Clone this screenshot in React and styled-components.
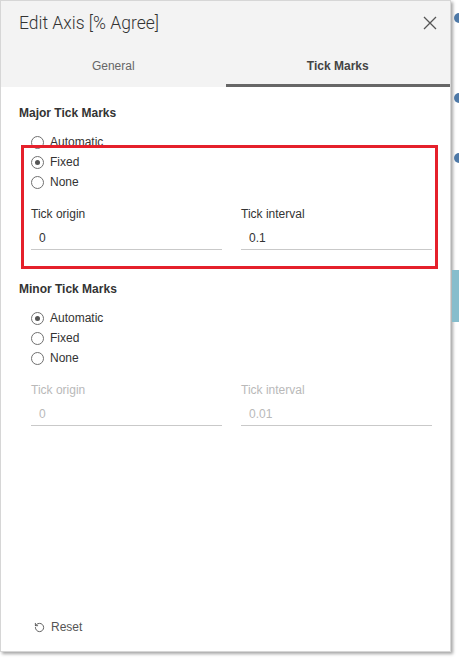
import React from 'react';
import styled, { createGlobalStyle } from 'styled-components';
import { RotateCcw } from 'lucide-react';

const GlobalStyle = createGlobalStyle`
    body {
        margin:0;
        background:#ffffff;
        font-family:"Liberation Sans", Arial, sans-serif;
        color:#333333;
    }
`;

const Page = styled.div`
    display:flex;
    flex-direction:row;
    width:459px;
    height:659px;
    overflow:hidden;
`;

const Panel = styled.div`
    position:relative;
    display:flex;
    flex-direction:column;
    width:451px;
    height:652px;
    box-sizing:border-box;
    border:1px solid #d6d6d6;
    background:#ffffff;
    box-shadow:2px 2px 3px rgba(0, 0, 0, 0.35);
    flex-shrink:0;
`;

const Header = styled.div`
    background:#f3f3f3;
`;

const TitleRow = styled.div`
    display:flex;
    flex-direction:row;
    align-items:center;
    justify-content:space-between;
    height:43px;
    padding:0 12px 0 18px;
`;

const Title = styled.div`
    font-family:Roboto, "Liberation Sans", sans-serif;
    font-weight:300;
    font-size:17.5px;
    color:#333333;
`;

const CloseButton = styled.div`
    display:flex;
    width:16px;
    height:16px;
    cursor:pointer;
`;

const Tabs = styled.div`
    display:flex;
    flex-direction:row;
`;

const Tab = styled.div`
    flex:1;
    height:43px;
    box-sizing:border-box;
    padding-top:4px;
    display:flex;
    align-items:center;
    justify-content:center;
    font-size:12px;
    font-weight:${p => p.$active ? 'bold' : 'normal'};
    color:${p => p.$active ? '#444444' : '#666666'};
    border-bottom:3px solid ${p => p.$active ? '#666666' : 'transparent'};
`;

const Content = styled.div`
    flex:1;
    padding:18px 18px 0;
`;

const SectionTitle = styled.div`
    font-size:12px;
    line-height:16px;
    font-weight:bold;
    color:#333333;
`;

const RadioGroup = styled.div`
    display:flex;
    flex-direction:column;
    margin:11px 0 14px 12px;
`;

const RadioRow = styled.label`
    display:flex;
    flex-direction:row;
    align-items:center;
    height:20px;
    font-size:12px;
    color:#333333;
`;

const RadioCircle = styled.span`
    display:flex;
    align-items:center;
    justify-content:center;
    width:13px;
    height:13px;
    box-sizing:border-box;
    margin-right:6px;
    border:1px solid #707070;
    border-radius:50%;
    background:#ffffff;
    &::after {
        content:"";
        display:${p => p.$checked ? 'block' : 'none'};
        width:5px;
        height:5px;
        border-radius:50%;
        background:#555555;
    }
`;

const FieldRow = styled.div`
    display:grid;
    grid-template-columns:1fr 1fr;
    column-gap:19px;
    margin-left:12px;
`;

const Field = styled.div`
    display:flex;
    flex-direction:column;
`;

const FieldLabel = styled.div`
    font-size:12px;
    line-height:16px;
    color:${p => p.$disabled ? '#b9b9b9' : '#333333'};
`;

const FieldValue = styled.div`
    height:28px;
    box-sizing:border-box;
    padding:8px 0 0 8px;
    font-size:12px;
    line-height:16px;
    color:${p => p.$disabled ? '#b9b9b9' : '#333333'};
    border-bottom:1px solid #c9c9c9;
`;

const Section = styled.div`
    margin-bottom:${p => p.$gap || 0}px;
`;

const Footer = styled.div`
    display:flex;
    flex-direction:row;
    align-items:center;
    height:16px;
    padding:0 0 16px 33px;
    font-size:12px;
    color:#555555;
`;

const ResetIcon = styled(RotateCcw)`
    margin-right:6px;
`;

const Annotation = styled.div`
    position:absolute;
    left:20px;
    top:144px;
    width:417px;
    height:124px;
    box-sizing:border-box;
    border:3px solid #e5202b;
    pointer-events:none;
`;

const Backdrop = styled.div`
    position:relative;
    flex:1;
`;

const Mark = styled.div`
    position:absolute;
    left:3px;
    width:10px;
    height:10px;
    border-radius:50%;
    background:#4e79a7;
`;

const Bar = styled.div`
    position:absolute;
    left:1px;
    top:270px;
    width:8px;
    height:52px;
    background:#86bdcc;
`;

function Radio({ label, checked }){
    return (
        <RadioRow>
            <RadioCircle $checked={checked} />
            {label}
        </RadioRow>
    );
}

function TickSection({ title, selected, origin, interval, disabled, gap }){
    return (
        <Section $gap={gap}>
            <SectionTitle>{title}</SectionTitle>
            <RadioGroup>
                {['Automatic', 'Fixed', 'None'].map(o => (
                    <Radio key={o} label={o} checked={o === selected} />
                ))}
            </RadioGroup>
            <FieldRow>
                <Field>
                    <FieldLabel $disabled={disabled}>Tick origin</FieldLabel>
                    <FieldValue $disabled={disabled}>{origin}</FieldValue>
                </Field>
                <Field>
                    <FieldLabel $disabled={disabled}>Tick interval</FieldLabel>
                    <FieldValue $disabled={disabled}>{interval}</FieldValue>
                </Field>
            </FieldRow>
        </Section>
    );
}

function App(){
    return (
        <Page>
            <GlobalStyle />
            <Panel>
                <Header>
                    <TitleRow>
                        <Title>Edit Axis [% Agree]</Title>
                        <CloseButton>
                            <svg width="16" height="16" viewBox="0 0 16 16">
                                <path d="M2 2 L14 14 M14 2 L2 14" stroke="#555555" strokeWidth="1.3" fill="none" />
                            </svg>
                        </CloseButton>
                    </TitleRow>
                    <Tabs>
                        <Tab>General</Tab>
                        <Tab $active>Tick Marks</Tab>
                    </Tabs>
                </Header>
                <Content>
                    <TickSection title="Major Tick Marks" selected="Fixed" origin="0" interval="0.1" gap={31} />
                    <TickSection title="Minor Tick Marks" selected="Automatic" origin="0" interval="0.01" disabled />
                </Content>
                <Footer>
                    <ResetIcon size={11} strokeWidth={2} color="#555555" />
                    Reset
                </Footer>
                <Annotation />
            </Panel>
            <Backdrop>
                <Mark style={{ top: 13 }} />
                <Mark style={{ top: 93 }} />
                <Mark style={{ top: 153 }} />
                <Bar />
            </Backdrop>
        </Page>
    );
}

export default App;
